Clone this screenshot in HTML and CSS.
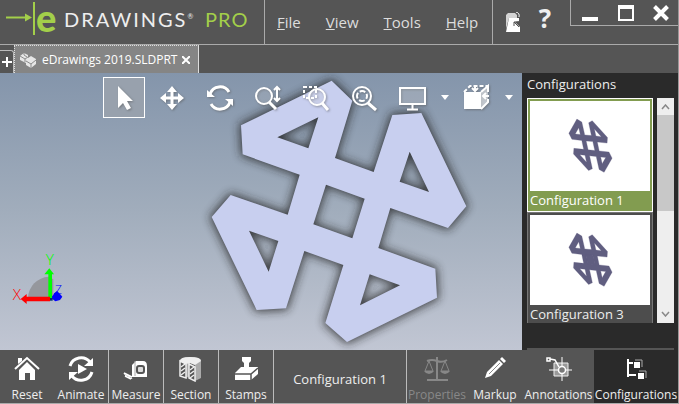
FILE: index.html
```
<!DOCTYPE html>
<html lang="en">

<head>
  <meta charset="UTF-8">
  <meta name="viewport" content="width=device-width, initial-scale=1.0">
  <title>eDrawings Pro</title>
  <link rel="stylesheet" href="styles.css">
</head>

<body>
  <!-- Title bar -->
  <header class="titlebar">
    <div class="logo">
      <svg class="logo-mark" width="30" height="34" viewBox="0 0 30 34">
        <path d="M0 15.500H22" fill="none" stroke="#a3cf4a" stroke-width="2"/>
        <path d="M19 11.500L26 15.500L19 19.500Z" fill="#a3cf4a"/>
        <path d="M28 0V33" stroke="#a3cf4a" stroke-width="2"/>
      </svg>
      <span class="logo-e">e</span>
      <span class="logo-name">DRAWINGS<sup>&reg;</sup></span>
      <span class="logo-pro">PRO</span>
    </div>
    <nav class="menu">
      <a href="#"><u>F</u>ile</a>
      <a href="#"><u>V</u>iew</a>
      <a href="#"><u>T</u>ools</a>
      <a href="#"><u>H</u>elp</a>
    </nav>
    <div class="quick">
      <button aria-label="Open">
        <svg width="16" height="20" viewBox="0 0 16 20">
          <path d="M1 17V3L3 1H10L12 3V6H4Z" fill="#d4d4d4"/>
          <path d="M4 6H14V9L10 10L15 15V20H1Z" fill="#fff"/>
          <path d="M9 10L14 15M9 10V14M9 10H13" stroke="#555" fill="none"/>
          <path d="M11 0Q15 1 14 5" stroke="#fff" fill="none"/>
        </svg>
      </button>
      <button class="help" aria-label="Help">?</button>
    </div>
    <div class="window-controls">
      <button aria-label="Minimize"><svg width="16" height="16" viewBox="0 0 16 16"><path d="M0 14H16" stroke="#fff" stroke-width="4"/></svg></button>
      <button aria-label="Maximize"><svg width="16" height="16" viewBox="0 0 16 16"><path d="M1 1H15V15H1Z" fill="none" stroke="#fff" stroke-width="2"/><path d="M0 2H16" stroke="#fff" stroke-width="4"/></svg></button>
      <button aria-label="Close"><svg width="16" height="16" viewBox="0 0 16 16"><path d="M1.500 1.500L14.500 14.500M14.500 1.500L1.500 14.500" stroke="#fff" stroke-width="4"/></svg></button>
    </div>
  </header>

  <!-- Document tabs -->
  <div class="tabs">
    <button class="tab-new" aria-label="New tab">
      <svg width="10" height="10" viewBox="0 0 10 10"><path d="M0 5H10M5 0V10" stroke="#fff" stroke-width="2"/></svg>
    </button>
    <div class="tab">
      <svg width="17" height="16" viewBox="0 0 17 16">
        <path d="M0 4L4 1L8 3V6L11 4L16 7V12L11 16L6 13V11L0 8Z" fill="#e6e6e6"/>
        <path d="M0 4L5 7L8 5M5 7V10M6 9L11 12L16 8M11 12V16M4 1V3L7 5" fill="none" stroke="#8a8a8a"/>
      </svg>
      <span>eDrawings 2019.SLDPRT</span>
      <button class="tab-close" aria-label="Close tab">
        <svg width="8" height="8" viewBox="0 0 8 8"><path d="M0 0L8 8M8 0L0 8" stroke="#fff" stroke-width="2"/></svg>
      </button>
    </div>
  </div>

  <main>
    <!-- Model view -->
    <section class="viewport">
      <svg class="model" viewBox="-600 -6 1566 831" preserveAspectRatio="xMinYMin meet">
        <defs>
          <path id="part" fill-rule="evenodd" d="M395 17L457 77L405 249L521 291L577 120L664 114L799 394L744 459L571 399L535 519L706 581L711 668L441 801L376 744L430 570L313 528L258 700L170 705L35 426L92 360L263 419L299 299L128 238L123 151Z
            M355 127L232 187L325 220Z M629 230L599 320L687 351Z M378 329L494 371L457 490L340 448Z M147 467L235 498L206 590Z M509 598L600 631L480 691Z"/>
          <filter id="shade" x="-20%" y="-20%" width="140%" height="140%">
            <feGaussianBlur stdDeviation="15"/>
          </filter>
        </defs>
        <use href="#part" fill="#222" stroke="#222" stroke-width="10" opacity="0.8" filter="url(#shade)"/>
        <use href="#part" fill="#c8cfef"/>
      </svg>

      <svg class="triad" width="110" height="110" viewBox="0 0 330 330">
        <path d="M84 174A66 66 0 0 1 146 110L160 118V174Z" fill="#95979d"/>
        <path d="M152 178L172 156" stroke="#00f" stroke-width="6"/>
        <path d="M162 160L172 154L182 164L187 170L180 180L166 184L158 178Z" fill="#00f"/>
        <path d="M145 178V103H133L148 85L162 103H156V178Z" fill="#0f0"/>
        <path d="M150 170V184H80V192L62 177L80 162V170Z" fill="#f00"/>
        <path d="M150 174H158V182H150Z" fill="#036"/>
        <text x="38" y="180" fill="#f00">X</text>
        <text x="137" y="76" fill="#0f0">Y</text>
        <text x="165" y="161" fill="#00f" class="axis-z">Z</text>
      </svg>

      <div class="toolbar">
        <button class="tool active" aria-label="Select">
          <svg width="30" height="30" viewBox="0 0 30 30"><path d="M9 3V25L14 20L18 27L22 25L18 18H24Z" fill="#fff"/></svg>
        </button>
        <button class="tool" aria-label="Pan">
          <svg width="30" height="30" viewBox="0 0 30 30">
            <path d="M15 6V24M6 15H24" stroke="#fff" stroke-width="3"/>
            <path d="M15 3L20 9H10ZM15 27L20 21H10ZM3 15L9 10V20ZM27 15L21 10V20Z" fill="#fff"/>
          </svg>
        </button>
        <button class="tool" aria-label="Rotate">
          <svg width="30" height="30" viewBox="0 0 30 30">
            <path d="M5 11A10.500 10.500 0 0 1 24 9M25 19A10.500 10.500 0 0 1 6 21" fill="none" stroke="#fff" stroke-width="3"/>
            <path d="M2 7V14H10ZM28 23V16H20Z" fill="#fff"/>
          </svg>
        </button>
        <button class="tool" aria-label="Zoom">
          <svg width="30" height="30" viewBox="0 0 30 30">
            <circle cx="11" cy="13" r="8" fill="#ffffff22" stroke="#fff" stroke-width="2"/>
            <path d="M16 19L23 26" stroke="#fff" stroke-width="3"/>
            <path d="M24 5V17M21 7L24 4L27 7M21 15L24 18L27 15" fill="none" stroke="#fff" stroke-width="2"/>
          </svg>
        </button>
        <button class="tool" aria-label="Zoom to area">
          <svg width="30" height="30" viewBox="0 0 30 30">
            <path d="M3 4H15V15H3Z" fill="none" stroke="#fff" stroke-width="2" stroke-dasharray="3 2"/>
            <circle cx="16" cy="14" r="8" fill="#ffffff22" stroke="#fff" stroke-width="2"/>
            <path d="M21 20L27 27" stroke="#fff" stroke-width="3"/>
          </svg>
        </button>
        <button class="tool" aria-label="Zoom to fit">
          <svg width="30" height="30" viewBox="0 0 30 30">
            <circle cx="13" cy="13" r="9" fill="none" stroke="#fff" stroke-width="2"/>
            <circle cx="13" cy="13" r="5" fill="none" stroke="#fff" stroke-width="2" stroke-dasharray="5.850 2" stroke-dashoffset="3"/>
            <path d="M19 20L27 27" stroke="#fff" stroke-width="3"/>
          </svg>
        </button>
        <button class="tool" aria-label="Display">
          <svg width="30" height="30" viewBox="0 0 30 30">
            <path d="M3 5H28V21H3Z" fill="#ffffff33" stroke="#fff" stroke-width="2"/>
            <path d="M15.500 21V26M10 26.500H21" stroke="#fff" stroke-width="2"/>
          </svg>
        </button>
        <button class="drop" aria-label="Display options"><svg width="8" height="5" viewBox="0 0 8 5"><path d="M0 0H8L4 5Z" fill="#fff"/></svg></button>
        <button class="tool" aria-label="View orientation">
          <svg width="30" height="30" viewBox="0 0 30 30">
            <path d="M3 9H20V26H3Z" fill="#fff"/>
            <path d="M3 9L9 3H27" fill="none" stroke="#fff" stroke-width="2" stroke-dasharray="4 2"/>
            <path d="M20 9L27 3V19L20 26Z" fill="#ffffff88"/>
            <path d="M20 9L27 3V9M27 16V19L20 26" fill="none" stroke="#fff" stroke-width="2"/>
            <path d="M14 2V8M11 5L14 8L17 5M28 13H22M25 10L22 13L25 16" fill="none" stroke="#fff" stroke-width="2"/>
          </svg>
        </button>
        <button class="drop" aria-label="Orientation options"><svg width="8" height="5" viewBox="0 0 8 5"><path d="M0 0H8L4 5Z" fill="#fff"/></svg></button>
      </div>
    </section>

    <!-- Configurations panel -->
    <aside class="panel">
      <h2>Configurations</h2>
      <div class="list">
        <div class="cards">
          <button class="card selected">
            <svg class="thumb" viewBox="0 0 360 270">
              <use href="#part" transform="matrix(-0.17 -0.089 -0.004 0.196 254 91)"/>
            </svg>
            <span>Configuration 1</span>
          </button>
          <button class="card">
            <svg class="thumb" viewBox="0 0 360 270">
              <g transform="matrix(-0.17 -0.089 -0.004 0.196 254 91)">
                <use href="#part"/>
                <path d="M370 320L504 366L465 500L330 455Z"/>
              </g>
            </svg>
            <span>Configuration 3</span>
          </button>
        </div>
        <div class="scrollbar">
          <svg width="9" height="6" viewBox="0 0 9 6"><path d="M1 5L4.500 1L8 5" fill="none" stroke="#888" stroke-width="1.500"/></svg>
          <div class="thumb-bar"></div>
          <svg class="down" width="9" height="6" viewBox="0 0 9 6"><path d="M1 1L4.500 5L8 1" fill="none" stroke="#888" stroke-width="1.500"/></svg>
        </div>
      </div>
      <div class="panel-edge"></div>
    </aside>
  </main>

  <!-- Command bar -->
  <footer class="commands">
    <button class="command">
      <svg width="26" height="26" viewBox="0 0 26 26">
        <path d="M1 13L13 2L25 13" fill="none" stroke="#fff" stroke-width="2"/>
        <path d="M4 2H8V5L4 8Z" fill="#fff"/>
        <path d="M5 14L13 6L21 14V24H16V17H11V24H5Z" fill="#fff"/>
      </svg>
      Reset
    </button>
    <button class="command">
      <svg width="26" height="26" viewBox="0 0 26 26">
        <path d="M2 10A11.500 11.500 0 0 1 22 6M24 16A11.500 11.500 0 0 1 4 20" fill="none" stroke="#fff" stroke-width="3"/>
        <path d="M25 2V10H16ZM1 24V16H10Z" fill="#fff"/>
        <path d="M10 8L19 13L10 18Z" fill="#fff"/>
      </svg>
      Animate
    </button>
    <button class="command divided">
      <svg width="26" height="26" viewBox="0 0 26 26">
        <path d="M9 9L13 5H20Q24 5 24 10V21H9Z" fill="#fff"/>
        <rect x="14" y="10" width="7" height="7" rx="2" fill="#ddd" stroke="#555" stroke-width="2"/>
        <path d="M12 5V20" stroke="#aaa"/>
        <path d="M1 17L9 21M2 20L8 23" stroke="#fff" stroke-width="1.500"/>
        <path d="M1 17L3 20L4 18L6 22L7 20L9 23" fill="none" stroke="#fff"/>
      </svg>
      Measure
    </button>
    <button class="command divided">
      <svg width="26" height="26" viewBox="0 0 26 26">
        <path d="M2 5Q2 1 12 1Q23 1 23 5V22L17 25V9L12 7V20L8 22L2 20Z" fill="#aaa"/>
        <path d="M2 5Q2 1 12 1Q23 1 23 5L17 9L12 7L8 8Z" fill="#eee"/>
        <path d="M2 5L8 8V22L2 20ZM11 8L17 11V25L11 22Z" fill="#555" stroke="#eee" stroke-width="1.500"/>
        <path d="M3 11L7 8M3 15L7 12M3 19L7 16M12 14L16 11M12 18L16 15M12 22L16 19" stroke="#eee" stroke-width="1.500"/>
      </svg>
      Section
    </button>
    <button class="command divided">
      <svg width="26" height="26" viewBox="0 0 26 26">
        <path d="M9 1H18V5L16 7V12H11V7L9 5Z" fill="#fff"/>
        <path d="M8 11H25V18L18 24H2V17Z" fill="#fff"/>
        <path d="M2 18H18L25 12M18 18V24" fill="none" stroke="#555" stroke-width="1.500"/>
      </svg>
      Stamps
    </button>
    <div class="current">Configuration 1</div>
    <button class="command properties" disabled>
      <svg width="26" height="26" viewBox="0 0 26 26">
        <path d="M13 1V23M3 5Q8 3 13 5Q18 7 23 4M3 24H24" fill="none" stroke="currentColor" stroke-width="2"/>
        <path d="M5 5L1 15H9ZM21 5L17 15H25Z" fill="none" stroke="currentColor"/>
        <path d="M0 15H10Q8 18 5 18Q2 18 0 15ZM16 15H26Q24 18 21 18Q18 18 16 15Z" fill="currentColor"/>
      </svg>
      Properties
    </button>
    <button class="command markup">
      <svg width="26" height="26" viewBox="0 0 26 26">
        <path d="M3 22L5 16L17 4L21 8L9 20Z" fill="#fff"/>
        <path d="M18 3L20 1L24 5L22 7Z" fill="#fff"/>
        <path d="M7 18L18 7" stroke="#888"/>
      </svg>
      Markup
    </button>
    <button class="command annotations">
      <svg width="26" height="26" viewBox="0 0 26 26">
        <path d="M8 7H22V20H8Z" fill="#999" stroke="#eee"/>
        <path d="M16 1V25M3 14H26" stroke="#fff"/>
        <circle cx="16" cy="14" r="3.500" fill="#777" stroke="#fff" stroke-width="1.500"/>
        <path d="M1 2H4V5H1ZM4 3L9 4L13 11" fill="none" stroke="#fff" stroke-width="1.500"/>
      </svg>
      Annotations
    </button>
    <button class="command configurations">
      <svg width="26" height="26" viewBox="0 0 26 26">
        <path d="M5 3V21M5 7H10M5 19H13" stroke="#fff" stroke-width="2"/>
        <path d="M11 6H17V12H11ZM15 17H21V23H15Z" fill="#fff"/>
        <path d="M12 4H19V11M16 15H23V22" fill="none" stroke="#aaa"/>
      </svg>
      Configurations
    </button>
  </footer>
</body>

</html>
```
FILE: styles.css
```
* {
  box-sizing: border-box;
}

body {
  margin: 0;
  min-height: 100vh;
  display: flex;
  flex-direction: column;
  background: #555;
  color: #eee;
  border-right: 1px solid #999;
  border-bottom: 1px solid #aaa;
  font-family: "Open Sans", "Noto Sans", sans-serif;
  font-size: 12px;
}

button {
  display: flex;
  align-items: center;
  justify-content: center;
  padding: 0;
  border: 0;
  background: none;
  color: inherit;
  font: inherit;
}

svg {
  display: block;
  flex: none;
}

/* Title bar */
.titlebar {
  display: flex;
  height: 45px;
  border-bottom: 1px solid #aaa;
}

.logo {
  display: flex;
  align-items: center;
  width: 265px;
  padding: 0 0 6px 6px;
  border-right: 1px solid #aaa;
  font-family: Lato, sans-serif;
  font-size: 20px;
}

.logo-e {
  width: 28px;
  color: #a3cf4a;
  font-size: 38px;
  font-weight: 900;
  line-height: 34px;
  padding-bottom: 4px;
}

.logo-name {
  width: 141px;
  letter-spacing: 2px;
}

.logo-name sup {
  font-size: 7px;
  vertical-align: 8px;
}

.logo-pro {
  color: #a3cf4a;
  letter-spacing: 1px;
}

.menu {
  display: flex;
  align-items: center;
  gap: 25px;
  width: 228px;
  padding-left: 12px;
  border-right: 1px solid #aaa;
  font-size: 15px;
}

.menu a {
  color: #ddd;
  text-decoration: none;
}

.quick {
  display: flex;
  align-items: center;
  gap: 16px;
  padding: 0 12px;
}

.help {
  width: 16px;
  font-size: 26px;
  font-weight: 700;
  padding-bottom: 8px;
}

.window-controls {
  display: flex;
  align-items: center;
  justify-content: space-between;
  width: 108px;
  height: 26px;
  margin-left: auto;
  padding: 0 9px 0 11px;
  border: solid #aaa;
  border-width: 0 0 1px 1px;
}

/* Document tabs */
.tabs {
  display: flex;
  align-items: flex-end;
  height: 28px;
}

.tab-new {
  width: 14px;
  height: 23px;
  border: solid #bbb;
  border-width: 1px 1px 0 0;
  border-radius: 0 3px 0 0;
}

.tab {
  display: flex;
  align-items: center;
  gap: 5px;
  height: 28px;
  padding: 0 8px 0 5px;
  background: #858585;
  border: 1px dotted #ddd;
  border-right-style: solid;
  border-bottom: 0;
  color: #fff;
}

/* Model view */
main {
  display: flex;
  flex: 1;
}

.viewport {
  position: relative;
  flex: 1;
  overflow: hidden;
  background: linear-gradient(#8495ab, #a1adbc 50%, #c1c6d3);
}

.model {
  position: absolute;
  inset: 0;
  width: 100%;
  height: 100%;
}

.triad {
  position: absolute;
  left: 0;
  bottom: 0;
  font-family: "Open Sans", sans-serif;
  font-size: 46px;
  font-weight: 300;
}

.axis-z {
  font-size: 36px;
}

.toolbar {
  position: absolute;
  top: 4px;
  left: 103px;
  display: flex;
  align-items: center;
}

.tool {
  width: 42px;
  height: 41px;
  margin-right: 6px;
}

.tool svg {
  filter: drop-shadow(1px 1px 1px #5558);
}

.tool.active {
  border: 1px solid #fff;
  background: #98a1ad;
}

.drop {
  width: 12px;
  margin-right: 4px;
}

/* Configurations panel */
.panel {
  display: flex;
  flex-direction: column;
  width: 156px;
  padding: 0 4px 0 5px;
  background: #2a2a2a;
}

.panel h2 {
  margin: 0;
  font-size: 13px;
  font-weight: 400;
  line-height: 23px;
  padding-bottom: 2px;
}

.list {
  display: flex;
  justify-content: space-between;
  height: 225px;
}

.cards {
  width: 126px;
  overflow: hidden;
}

.card {
  display: block;
  width: 126px;
  height: 114px;
  padding: 2px;
  border: 1px solid #777;
  background: #4d4d4d;
  text-align: left;
  font-size: 13px;
  line-height: 18px;
}

.card.selected {
  border-color: #fff;
  background: #829c50;
  color: #fff;
}

.thumb {
  width: 120px;
  height: 90px;
  background: #fff;
  fill: #605e80;
  stroke: #605e80;
  stroke-width: 4px;
}

.scrollbar {
  display: flex;
  flex-direction: column;
  align-items: center;
  width: 17px;
  padding: 6px 0;
  background: #eee;
}

.thumb-bar {
  width: 17px;
  height: 96px;
  margin-top: 5px;
  background: #c8c8c8;
}

.scrollbar .down {
  margin-top: auto;
}

.panel-edge {
  height: 2px;
  margin-top: auto;
  background: #555;
}

/* Command bar */
.commands {
  display: flex;
  height: 53px;
}

.command {
  flex-direction: column;
  justify-content: flex-start;
  gap: 2px;
  width: 54px;
  padding-top: 6px;
  line-height: 22px;
}

.command.divided {
  width: 55px;
  border-left: 1px solid #bbb;
}

.current {
  display: flex;
  flex: 1;
  align-items: center;
  justify-content: center;
  padding-top: 4px;
  border: solid #bbb;
  border-width: 0 1px;
  font-size: 13px;
}

.command.properties {
  width: 60px;
  color: #888;
}

.command.markup {
  width: 56px;
}

.command.annotations {
  width: 71px;
}

.command.configurations {
  width: 84px;
  background: #2a2a2a;
}
```
